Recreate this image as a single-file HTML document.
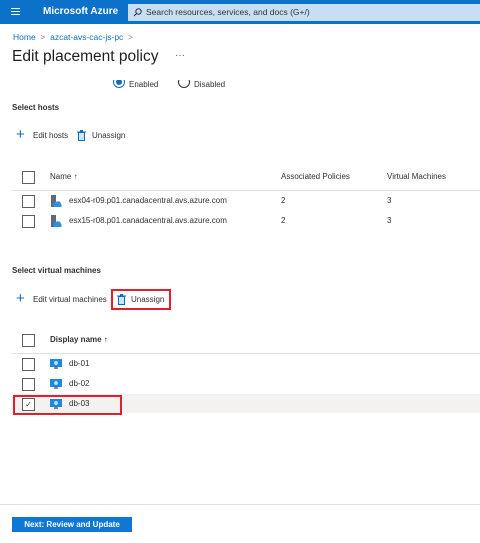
<!DOCTYPE html>
<html><head><meta charset="utf-8"><style>
*{margin:0;padding:0;box-sizing:border-box}
body{width:480px;height:543px;background:#fff;font-family:"Liberation Sans",sans-serif;position:relative;overflow:hidden;color:#323130}
.a{position:absolute;white-space:nowrap}
.t{font-size:8px;color:#323130}
.cb{position:absolute;width:13px;height:13px;border:1px solid #605e5c;background:#fff}
.hr{position:absolute;left:12px;right:0;height:1px;background:#e1dfdd}
</style></head><body>
<div class="a" style="left:0;top:0;width:480px;height:24px;background:#0c71c8"></div>
<div class="a" style="left:11px;top:8px;width:9px;height:1px;background:#fff;box-shadow:0 3px 0 #fff,0 6px 0 #fff"></div>
<div class="a" style="left:43px;top:6px;font-size:10px;color:#fff;font-weight:bold">Microsoft Azure</div>
<div class="a" style="left:128px;top:4px;width:352px;height:17px;background:#c6dff5"></div>
<svg class="a" style="left:133px;top:8px" width="9" height="9"><circle cx="5.5" cy="3.5" r="2.7" fill="none" stroke="#333" stroke-width="1"/><line x1="3.5" y1="5.5" x2="1" y2="8" stroke="#333"/></svg>
<div class="a" style="left:146px;top:7px;font-size:8.5px;color:#333">Search resources, services, and docs (G+/)</div>
<div class="a" style="left:13px;top:32px;font-size:8.5px;color:#0f6cbd">Home <span style="color:#888">&nbsp;&gt;&nbsp;</span> azcat-avs-cac-js-pc <span style="color:#888">&nbsp;&gt;</span></div>
<div class="a" style="left:12px;top:48px;font-size:15.5px;color:#201f1e">Edit placement policy</div>
<div class="a" style="left:175px;top:50px;font-size:10px;color:#555">···</div>
<div class="a" style="left:113px;top:76px;width:12px;height:12px;border-radius:50%;border:1px solid #0f6cbd"></div>
<div class="a" style="left:116px;top:79px;width:6px;height:6px;border-radius:50%;background:#0f6cbd"></div>
<div class="a" style="left:178px;top:76px;width:12px;height:12px;border-radius:50%;border:1px solid #333"></div>
<div class="a" style="left:0;top:70px;width:480px;height:10px;background:#fff"></div>
<div class="a t" style="left:129px;top:80px">Enabled</div>
<div class="a t" style="left:194px;top:80px">Disabled</div>
<div class="a t" style="left:12px;top:103px;font-weight:bold">Select hosts</div>
<div class="a" style="left:16px;top:127px;font-size:15px;color:#0f6cbd;line-height:15px">+</div>
<div class="a t" style="left:33px;top:131px">Edit hosts</div>
<svg class="a" style="left:77px;top:130px" width="9" height="11"><rect x="1.5" y="2.5" width="6" height="8" fill="#cfe4f7" stroke="#0f6cbd"/><line x1="0" y1="2" x2="9" y2="2" stroke="#0f6cbd"/><rect x="3" y="0" width="3" height="2" fill="#0f6cbd"/></svg>
<div class="a t" style="left:92px;top:131px">Unassign</div>
<div class="cb" style="left:22px;top:171px"></div>
<div class="a t" style="left:50px;top:172px">Name ↑</div>
<div class="a t" style="left:281px;top:172px">Associated Policies</div>
<div class="a t" style="left:387px;top:172px">Virtual Machines</div>
<div class="hr" style="top:190px"></div>
<div class="cb" style="left:22px;top:195px"></div>
<svg class="a" style="left:50px;top:195px" width="12" height="13"><rect x="1" y="0" width="5" height="12" fill="#5a6a80"/><path d="M4 12 a3 3 0 0 1 2-5 a3 3 0 0 1 5 2 a2 2 0 0 1 0 3z" fill="#2d8fe0"/></svg>
<div class="a t" style="left:69px;top:196px">esx04-r09.p01.canadacentral.avs.azure.com</div>
<div class="a t" style="left:281px;top:196px">2</div>
<div class="a t" style="left:387px;top:196px">3</div>
<div class="cb" style="left:22px;top:215px"></div>
<svg class="a" style="left:50px;top:215px" width="12" height="13"><rect x="1" y="0" width="5" height="12" fill="#5a6a80"/><path d="M4 12 a3 3 0 0 1 2-5 a3 3 0 0 1 5 2 a2 2 0 0 1 0 3z" fill="#2d8fe0"/></svg>
<div class="a t" style="left:69px;top:216px">esx15-r08.p01.canadacentral.avs.azure.com</div>
<div class="a t" style="left:281px;top:216px">2</div>
<div class="a t" style="left:387px;top:216px">3</div>
<div class="a t" style="left:12px;top:266px;font-weight:bold">Select virtual machines</div>
<div class="a" style="left:16px;top:291px;font-size:15px;color:#0f6cbd;line-height:15px">+</div>
<div class="a t" style="left:33px;top:295px">Edit virtual machines</div>
<div class="a" style="left:111px;top:289px;width:60px;height:21px;border:2px solid #e0202e"></div>
<svg class="a" style="left:117px;top:294px" width="9" height="11"><rect x="1.5" y="2.5" width="6" height="8" fill="#cfe4f7" stroke="#0f6cbd"/><line x1="0" y1="2" x2="9" y2="2" stroke="#0f6cbd"/><rect x="3" y="0" width="3" height="2" fill="#0f6cbd"/></svg>
<div class="a t" style="left:131px;top:295px">Unassign</div>
<div class="cb" style="left:22px;top:334px"></div>
<div class="a t" style="left:50px;top:335px;font-weight:bold">Display name ↑</div>
<div class="hr" style="top:353px"></div>
<div class="a" style="left:12px;top:394px;width:468px;height:19px;background:#f3f2f1"></div>
<div class="cb" style="left:22px;top:358px"></div>
<div class="cb" style="left:22px;top:378px"></div>
<div class="cb" style="left:22px;top:398px;font-size:8px;line-height:11px;text-align:center;color:#333">✓</div>
<svg class="a" style="left:50px;top:358px" width="12" height="12"><rect x="0" y="1" width="12" height="8" fill="#1e87e0"/><circle cx="6" cy="5" r="2" fill="#aee0ff"/><rect x="4" y="9" width="4" height="2" fill="#7a8a99"/></svg>
<svg class="a" style="left:50px;top:378px" width="12" height="12"><rect x="0" y="1" width="12" height="8" fill="#1e87e0"/><circle cx="6" cy="5" r="2" fill="#aee0ff"/><rect x="4" y="9" width="4" height="2" fill="#7a8a99"/></svg>
<svg class="a" style="left:50px;top:398px" width="12" height="12"><rect x="0" y="1" width="12" height="8" fill="#1e87e0"/><circle cx="6" cy="5" r="2" fill="#aee0ff"/><rect x="4" y="9" width="4" height="2" fill="#7a8a99"/></svg>
<div class="a t" style="left:69px;top:359px">db-01</div>
<div class="a t" style="left:69px;top:379px">db-02</div>
<div class="a t" style="left:69px;top:399px">db-03</div>
<div class="a" style="left:13px;top:395px;width:109px;height:20px;border:2px solid #e0202e"></div>
<div class="a" style="left:0;top:504px;width:480px;height:1px;background:#e1dfdd"></div>
<div class="a" style="left:12px;top:517px;width:120px;height:15px;background:#0f78d4;color:#fff;font-size:8px;font-weight:bold;text-align:center;line-height:15px">Next: Review and Update</div>
</body></html>
